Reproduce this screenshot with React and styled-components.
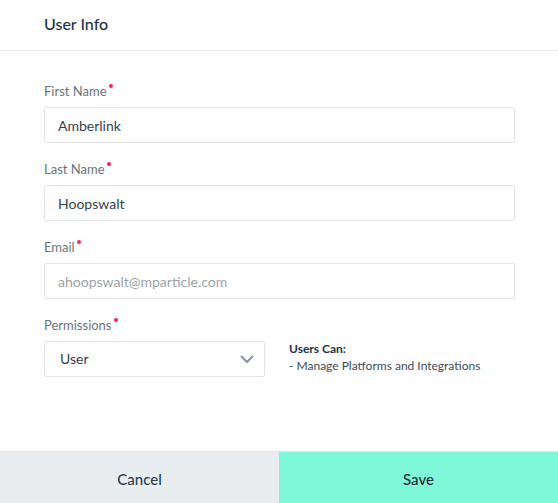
import React from 'react';
import styled, { createGlobalStyle } from 'styled-components';

const GlobalStyle = createGlobalStyle`
  html, body {
    margin: 0;
    padding: 0;
    background: #fff;
  }
  body {
    font-family: Lato, "Open Sans", sans-serif;
  }
`;

const Modal = styled.div`
  width: 558px;
  height: 503px;
  display: flex;
  flex-direction: column;
  background: #fff;
`;

const Header = styled.div`
  box-sizing: border-box;
  height: 51px;
  border-bottom: 1px solid #e6e8ea;
  display: flex;
  align-items: center;
  padding: 0 0 4px 44px;
`;

const Title = styled.h2`
  margin: 0;
  font-size: 16px;
  font-weight: 500;
  color: #1e3246;
`;

const Body = styled.div`
  flex: 1;
  padding: 32px 43px 0 44px;
`;

const Field = styled.div`
  margin-bottom: 18px;
`;

const Label = styled.label`
  display: block;
  font-size: 13px;
  line-height: 16px;
  color: #6a737d;
  margin-bottom: 8px;
`;

const Required = styled.span`
  display: inline-block;
  width: 4px;
  height: 4px;
  border-radius: 50%;
  background: #f2245a;
  margin-left: 2px;
  vertical-align: top;
  margin-top: 1px;
`;

const Input = styled.input`
  box-sizing: border-box;
  width: 100%;
  height: 36px;
  border: 1px solid #e2e4e7;
  border-radius: 2px;
  padding: 0 13px;
  font-family: inherit;
  font-size: 14px;
  color: ${p => (p.$muted ? '#9ba2a9' : '#34414d')};
  background: #fff;
  outline: none;
`;

const Row = styled.div`
  display: flex;
  align-items: flex-start;
  gap: 24px;
`;

const SelectBox = styled.div`
  box-sizing: border-box;
  width: 221px;
  height: 36px;
  border: 1px solid #e2e4e7;
  border-radius: 2px;
  display: flex;
  align-items: center;
  justify-content: space-between;
  padding: 0 9px 1px 15px;
  font-size: 14px;
  color: #34414d;
`;

const Info = styled.div`
  margin-top: -1px;
  font-size: 12px;
  line-height: 17px;
  color: #3a4a5a;
`;

const InfoTitle = styled.div`
  font-weight: 700;
  color: #1e3246;
`;

const Footer = styled.div`
  display: flex;
  height: 51px;
  border-top: 1px solid #e4e6e8;
`;

const FooterButton = styled.button`
  flex: 1;
  border: none;
  margin: 0;
  padding: 3px 0 0;
  font-family: inherit;
  font-size: 15px;
  font-weight: 500;
  color: ${p => (p.$primary ? '#1d2b36' : '#2b3f52')};
  background: ${p => (p.$primary ? '#7ff7d9' : '#e9edf0')};
  cursor: pointer;
`;

const Chevron = () => (
  <svg width="16" height="10" viewBox="0 0 16 10">
    <path d="M2 2 L8 8 L14 2" fill="none" stroke="#8e959c" strokeWidth="2.2" />
  </svg>
);

export default function App() {
  return (
    <Modal>
      <GlobalStyle />
      <Header>
        <Title>User Info</Title>
      </Header>
      <Body>
        <Field>
          <Label>First Name<Required /></Label>
          <Input defaultValue="Amberlink" />
        </Field>
        <Field>
          <Label>Last Name<Required /></Label>
          <Input defaultValue="Hoopswalt" />
        </Field>
        <Field>
          <Label>Email<Required /></Label>
          <Input $muted readOnly defaultValue="ahoopswalt@mparticle.com" />
        </Field>
        <Field>
          <Label>Permissions<Required /></Label>
          <Row>
            <SelectBox>
              <span>User</span>
              <Chevron />
            </SelectBox>
            <Info>
              <InfoTitle>Users Can:</InfoTitle>
              <div>- Manage Platforms and Integrations</div>
            </Info>
          </Row>
        </Field>
      </Body>
      <Footer>
        <FooterButton>Cancel</FooterButton>
        <FooterButton $primary>Save</FooterButton>
      </Footer>
    </Modal>
  );
}
